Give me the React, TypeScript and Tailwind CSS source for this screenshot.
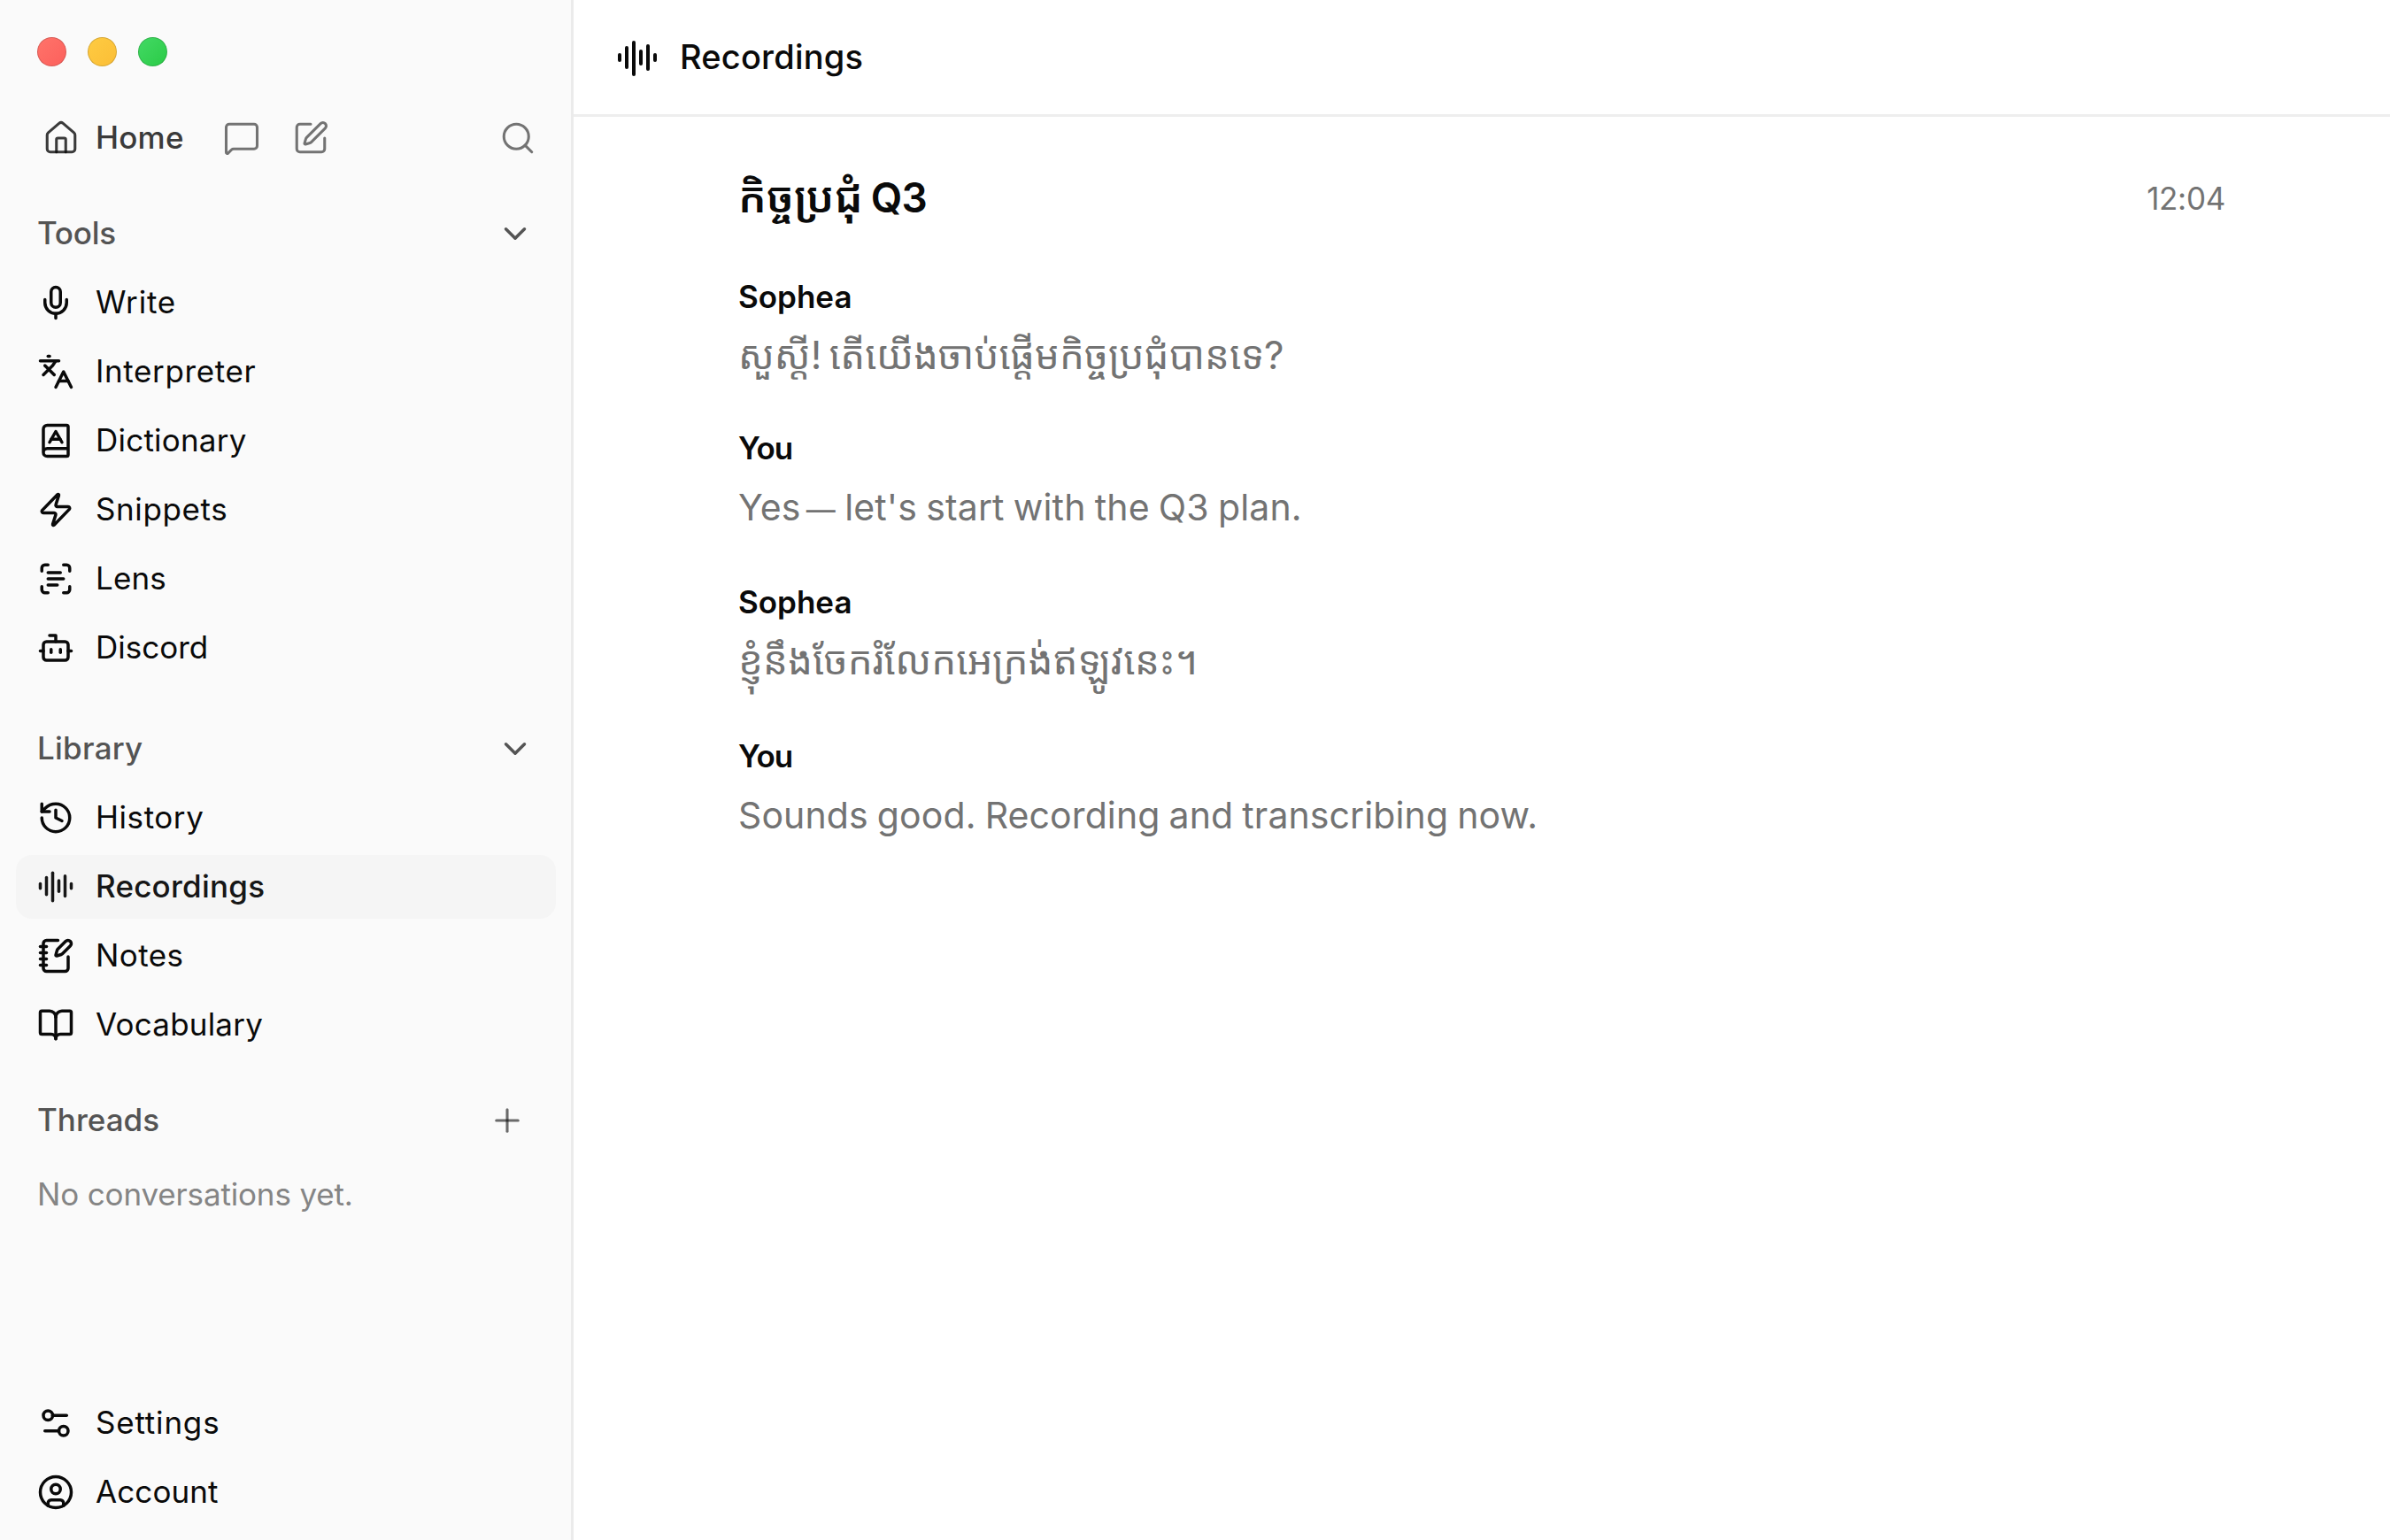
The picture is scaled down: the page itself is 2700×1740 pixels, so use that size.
import type { ReactNode } from "react";
import {
  AudioLines,
  BookA,
  BookOpen,
  Bot,
  ChevronDown,
  CircleUser,
  History,
  House,
  Languages,
  MessageSquare,
  Mic,
  NotebookPen,
  Plus,
  ScanText,
  Search,
  Settings2,
  SquarePen,
  Zap,
  type LucideIcon,
} from "lucide-react";

type Item = { icon: LucideIcon; label: string; tracking: string; active?: boolean };

const tools: Item[] = [
  { icon: Mic, label: "Write", tracking: "tracking-[0.8px]" },
  { icon: Languages, label: "Interpreter", tracking: "tracking-[0.62px]" },
  { icon: BookA, label: "Dictionary", tracking: "tracking-[0.22px]" },
  { icon: Zap, label: "Snippets", tracking: "tracking-[0.62px]" },
  { icon: ScanText, label: "Lens", tracking: "tracking-[0.1px]" },
  { icon: Bot, label: "Discord", tracking: "tracking-[0px]" },
];

const library: Item[] = [
  { icon: History, label: "History", tracking: "tracking-[0.56px]" },
  { icon: AudioLines, label: "Recordings", tracking: "tracking-[0.22px]", active: true },
  { icon: NotebookPen, label: "Notes", tracking: "tracking-[0.4px]" },
  { icon: BookOpen, label: "Vocabulary", tracking: "tracking-[0.2px]" },
];

const footer: Item[] = [
  { icon: Settings2, label: "Settings", tracking: "tracking-[0.8px]" },
  { icon: CircleUser, label: "Account", tracking: "tracking-[0.1px]" },
];

function NavItem({ icon: Icon, label, tracking, active }: Item) {
  return (
    <a
      className={`flex h-[72px] items-center gap-6 rounded-[18px] px-6 ${
        active ? "bg-[#f5f5f5] font-medium text-[#171717]" : "text-[#0a0a0a]"
      }`}
    >
      <Icon className="size-[42px] shrink-0" strokeWidth={2} />
      <span className={`pb-0.5 ${tracking}`}>{label}</span>
    </a>
  );
}

function NavList({ items }: { items: Item[] }) {
  return (
    <nav className="flex flex-col gap-1.5">
      {items.map((item) => (
        <NavItem key={item.label} {...item} />
      ))}
    </nav>
  );
}

function SectionTitle({ children, action }: { children: ReactNode; action: ReactNode }) {
  return (
    <div className="flex h-[72px] items-center justify-between pl-6 font-medium text-[#545454]">
      {children}
      {action}
    </div>
  );
}

function Message({
  speaker,
  speakerClass,
  className,
  children,
}: {
  speaker: string;
  speakerClass: string;
  className: string;
  children: ReactNode;
}) {
  return (
    <div className="whitespace-nowrap">
      <div className={`h-[60px] text-[35px] leading-[60px] font-semibold text-[#0a0a0a] ${speakerClass}`}>
        {speaker}
      </div>
      <p className={`h-[73px] text-[#737373] ${className}`}>{children}</p>
    </div>
  );
}

export default function App() {
  return (
    <div className="flex h-[1740px] w-[2700px] overflow-hidden bg-white font-['Inter','Noto_Sans_Khmer',sans-serif] text-[35px] leading-[54px] text-[#0a0a0a]">
      <aside className="flex w-[648px] shrink-0 flex-col border-r-[3px] border-[#ebebeb] bg-[#fafafa] pr-[17px] pb-[18px] pl-[18px]">
        <div className="flex gap-6 pt-[42px] pl-6">
          <span className="size-[33px] rounded-full border-[1.5px] border-black/15 bg-linear-to-br from-[#ff736a] to-[#fc605c]" />
          <span className="size-[33px] rounded-full border-[1.5px] border-black/15 bg-linear-to-br from-[#fecb42] to-[#fbbe36]" />
          <span className="size-[33px] rounded-full border-[1.5px] border-black/15 bg-linear-to-br from-[#42d964] to-[#2acb46]" />
        </div>

        <div className="mt-[45px] flex h-[72px] items-center pr-[22px] pl-[30px]">
          <House className="size-[42px] text-[#0a0a0a]/80" strokeWidth={1.75} />
          <span className="ml-[18px] w-[144px] pb-0.5 font-medium tracking-[0.2px] text-[#3a3a3a]">Home</span>
          <MessageSquare className="size-[42px] text-[#737373]" strokeWidth={1.75} />
          <SquarePen className="ml-9 size-[42px] text-[#737373]" strokeWidth={1.75} />
          <Search className="ml-auto size-[42px] text-[#737373]" strokeWidth={1.75} />
        </div>

        <div className="mt-9">
          <SectionTitle
            action={<ChevronDown className="mr-[25px] size-[42px]" strokeWidth={2} />}
          >
            <span className="pb-0.5 tracking-[-0.25px]">Tools</span>
          </SectionTitle>
          <div className="mt-1.5">
            <NavList items={tools} />
          </div>
        </div>

        <div className="mt-[42px]">
          <SectionTitle
            action={<ChevronDown className="mr-[25px] size-[42px]" strokeWidth={2} />}
          >
            <span className="pb-0.5 tracking-[0.25px]">Library</span>
          </SectionTitle>
          <div className="mt-1.5">
            <NavList items={library} />
          </div>
        </div>

        <div className="mt-9">
          <SectionTitle
            action={<Plus className="mr-[34px] size-[42px] text-[#0a0a0a]/60" strokeWidth={1.75} />}
          >
            <span className="pb-0.5">Threads</span>
          </SectionTitle>
          <p className="mt-5 pl-6 tracking-[-0.15px] text-[#858585]">No conversations yet.</p>
        </div>

        <div className="mt-auto">
          <NavList items={footer} />
        </div>
      </aside>

      <main className="flex min-w-0 flex-1 flex-col">
        <header className="flex h-[132px] items-center gap-6 border-b-[3px] border-[#eeeeee] pt-[3px] pl-12 text-[38px] font-medium">
          <AudioLines className="size-12" strokeWidth={2} />
          <span className="pb-[5px] tracking-[0.2px]">Recordings</span>
        </header>

        <article className="mx-auto w-[1680px] pt-[53px]">
          <div className="flex h-[72px] items-center justify-between">
            <h1 className="pt-1 text-[48px] leading-[72px] font-semibold">
              កិច្ចប្រជុំ<span className="pl-[9px] text-[46px] tracking-[-0.6px]">Q3</span>
            </h1>
            <time className="pt-1.5 tracking-[-0.3px] text-[#737373]">12:04</time>
          </div>

          <div className="mt-12">
            <Message speaker="Sophea" speakerClass="tracking-normal" className="text-[44px] leading-[73px] [word-spacing:-4px]">
              សួស្តី! តើយើងចាប់ផ្តើមកិច្ចប្រជុំបានទេ?
            </Message>
          </div>
          <div className="mt-[38px]">
            <Message speaker="You" speakerClass="tracking-[-1px]" className="text-[41px] leading-[75px] tracking-[0.14px] [word-spacing:-1.5px]">
              Yes <span className="-ml-1 text-[33px]">—</span> let's start with the Q3 plan.
            </Message>
          </div>
          <div className="mt-[41px]">
            <Message speaker="Sophea" speakerClass="tracking-normal" className="text-[44.1px] leading-[73px]">
              ខ្ញុំនឹងចែករំលែកអេក្រង់ឥឡូវនេះ។
            </Message>
          </div>
          <div className="mt-[41px]">
            <Message speaker="You" speakerClass="tracking-[-1px]" className="text-[41px] leading-[75px] tracking-[0.1px] [word-spacing:-1.5px]">
              Sounds good. Recording and transcribing now.
            </Message>
          </div>
        </article>
      </main>
    </div>
  );
}
